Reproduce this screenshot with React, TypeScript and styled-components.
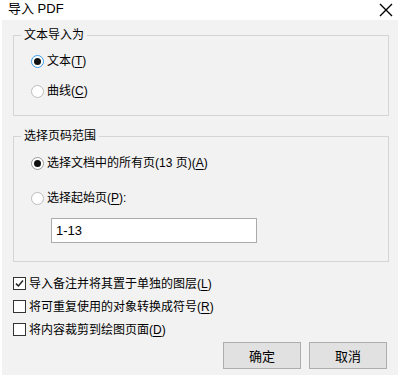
import React from 'react';
import styled, { createGlobalStyle } from 'styled-components';

const GlobalStyle = createGlobalStyle`
  html, body {
    margin: 0;
    padding: 0;
    background: #ffffff;
  }
  body {
    font-family: "Liberation Sans", "Noto Sans CJK SC", sans-serif;
    font-size: 12px;
    color: #000;
  }
`;

const Window = styled.div`
  width: 400px;
  height: 375px;
  display: flex;
  flex-direction: column;
  background: #fff;
  overflow: hidden;
`;

const TitleBar = styled.div`
  height: 20px;
  display: flex;
  align-items: center;
  justify-content: space-between;
  padding: 0 7px 0 8px;
  box-sizing: border-box;
`;

const Title = styled.span`
  font-size: 13px;
  line-height: 20px;
  margin-top: -2px;
`;

const Body = styled.div`
  flex: 1;
  margin: 0 2px;
  background: #f2f2f2;
  display: flex;
  flex-direction: column;
  padding: 15px 9px 0 11px;
`;

const GroupBox = styled.div<{ $top?: number; $padTop?: number; $padBottom?: number }>`
  position: relative;
  border: 1px solid #d5d5d5;
  margin-top: ${(p) => p.$top ?? 0}px;
  padding: ${(p) => p.$padTop ?? 10}px 0 ${(p) => p.$padBottom ?? 9}px 17px;
  display: flex;
  flex-direction: column;
`;

const Legend = styled.span`
  position: absolute;
  top: -9px;
  left: 7px;
  padding: 0 3px;
  background: #f2f2f2;
  font-size: 12px;
  line-height: 16px;
`;

const OptionRow = styled.label<{ $gap?: number }>`
  height: 30px;
  margin-top: ${(p) => p.$gap ?? 0}px;
  display: flex;
  align-items: center;
  gap: 3px;
  line-height: 16px;
`;

const RadioDot = styled.span<{ $checked?: boolean; $focus?: boolean }>`
  width: 11px;
  height: 11px;
  border-radius: 50%;
  border: 1px solid ${(p) => (p.$focus ? '#3d9be9' : p.$checked ? '#9a9a9a' : '#bcbcbc')};
  background: #fff;
  display: flex;
  align-items: center;
  justify-content: center;
  flex-shrink: 0;

  &::after {
    content: '';
    width: 7px;
    height: 7px;
    border-radius: 50%;
    background: ${(p) => (p.$checked ? '#111' : 'transparent')};
  }
`;

const Key = styled.span`
  text-decoration: underline;
  text-underline-offset: 2px;
`;

const PageInput = styled.div`
  margin: 5px 0 0 20px;
  width: 200px;
  height: 23px;
  border: 1px solid #ababab;
  background: #fff;
  display: flex;
  align-items: center;
  padding-left: 4px;
  font-size: 13px;
`;

const CheckList = styled.div`
  margin-top: 10px;
  display: flex;
  flex-direction: column;
`;

const CheckRow = styled.label`
  height: 23px;
  display: flex;
  align-items: center;
  gap: 3px;
  line-height: 16px;
`;

const CheckBox = styled.span`
  width: 11px;
  height: 11px;
  border: 1px solid #333;
  background: #fff;
  display: flex;
  align-items: center;
  justify-content: center;
  flex-shrink: 0;
`;

const ButtonBar = styled.div`
  margin-top: 1px;
  display: flex;
  justify-content: flex-end;
  gap: 8px;
  padding-right: 2px;
`;

const Button = styled.button`
  width: 78px;
  height: 27px;
  border: 1px solid #adadad;
  background: #e1e1e1;
  font-family: "Liberation Sans", "Noto Sans CJK SC", sans-serif;
  font-size: 13px;
  color: #000;
  padding: 0;
`;

const Radio: React.FC<{ checked?: boolean; focus?: boolean; gap?: number; children: React.ReactNode }> = ({
  checked,
  focus,
  gap,
  children,
}) => (
  <OptionRow $gap={gap}>
    <RadioDot $checked={checked} $focus={focus} />
    <span>{children}</span>
  </OptionRow>
);

const Check: React.FC<{ checked?: boolean; children: React.ReactNode }> = ({ checked, children }) => (
  <CheckRow>
    <CheckBox>
      {checked && (
        <svg width="9" height="9" viewBox="0 0 9 9">
          <path d="M1 4.6 L3.4 7 L8 1.6" fill="none" stroke="#222" strokeWidth="1.5" />
        </svg>
      )}
    </CheckBox>
    <span>{children}</span>
  </CheckRow>
);

export default function App() {
  return (
    <>
      <GlobalStyle />
      <Window>
        <TitleBar>
          <Title>导入 PDF</Title>
          <svg width="14" height="14" viewBox="0 0 14 14">
            <path d="M1 1 L13 13 M13 1 L1 13" stroke="#000" strokeWidth="1.4" />
          </svg>
        </TitleBar>
        <Body>
          <GroupBox>
            <Legend>文本导入为</Legend>
            <Radio checked focus>
              文本(<Key>T</Key>)
            </Radio>
            <Radio>
              曲线(<Key>C</Key>)
            </Radio>
          </GroupBox>

          <GroupBox $top={20} $padTop={11} $padBottom={18}>
            <Legend>选择页码范围</Legend>
            <Radio checked>
              选择文档中的所有页(13 页)(<Key>A</Key>)
            </Radio>
            <Radio gap={5}>
              选择起始页(<Key>P</Key>):
            </Radio>
            <PageInput>1-13</PageInput>
          </GroupBox>

          <CheckList>
            <Check checked>
              导入备注并将其置于单独的图层(<Key>L</Key>)
            </Check>
            <Check>
              将可重复使用的对象转换成符号(<Key>R</Key>)
            </Check>
            <Check>
              将内容裁剪到绘图页面(<Key>D</Key>)
            </Check>
          </CheckList>

          <ButtonBar>
            <Button>确定</Button>
            <Button>取消</Button>
          </ButtonBar>
        </Body>
      </Window>
    </>
  );
}
